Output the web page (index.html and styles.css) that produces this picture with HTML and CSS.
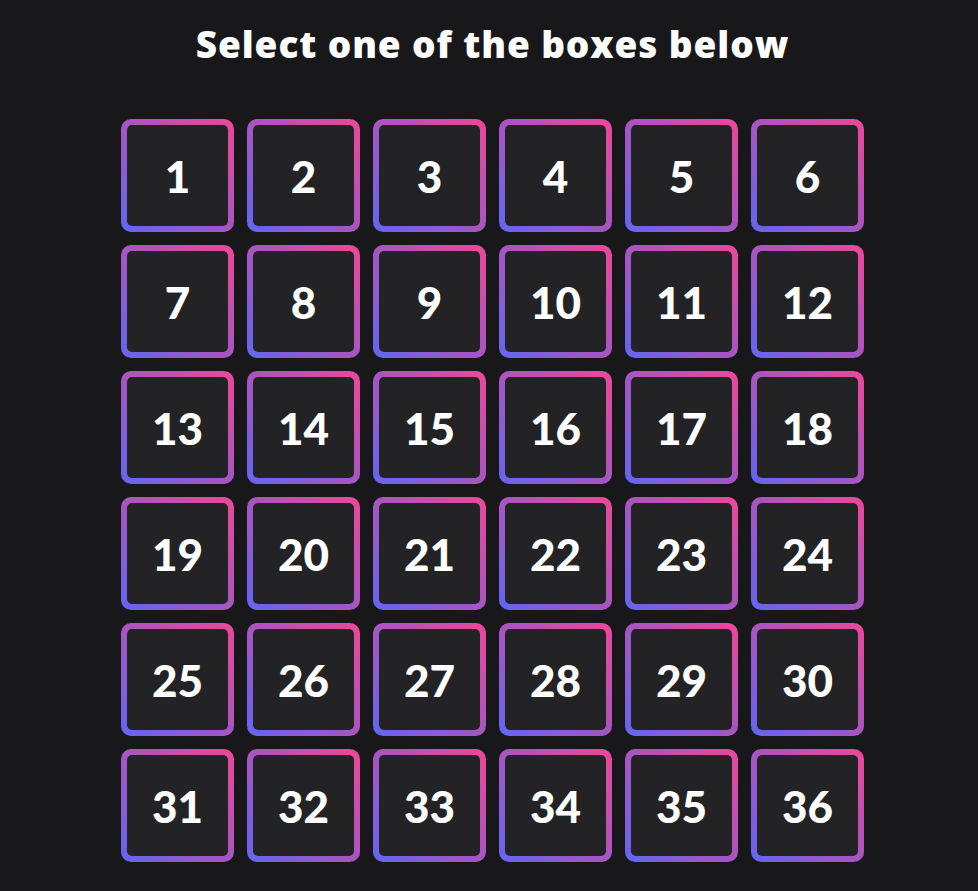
FILE: index.html
```html
<!DOCTYPE html>
<html>
<head>
<meta charset="utf-8">
<link rel="stylesheet" href="styles.css">
</head>
<body>
<main class="page">
  <h1 class="title">Select one of the boxes below</h1>
  <div class="grid">
    <div class="box"><div class="inner">1</div></div>
    <div class="box"><div class="inner">2</div></div>
    <div class="box"><div class="inner">3</div></div>
    <div class="box"><div class="inner">4</div></div>
    <div class="box"><div class="inner">5</div></div>
    <div class="box"><div class="inner">6</div></div>
    <div class="box"><div class="inner">7</div></div>
    <div class="box"><div class="inner">8</div></div>
    <div class="box"><div class="inner">9</div></div>
    <div class="box"><div class="inner">10</div></div>
    <div class="box"><div class="inner">11</div></div>
    <div class="box"><div class="inner">12</div></div>
    <div class="box"><div class="inner">13</div></div>
    <div class="box"><div class="inner">14</div></div>
    <div class="box"><div class="inner">15</div></div>
    <div class="box"><div class="inner">16</div></div>
    <div class="box"><div class="inner">17</div></div>
    <div class="box"><div class="inner">18</div></div>
    <div class="box"><div class="inner">19</div></div>
    <div class="box"><div class="inner">20</div></div>
    <div class="box"><div class="inner">21</div></div>
    <div class="box"><div class="inner">22</div></div>
    <div class="box"><div class="inner">23</div></div>
    <div class="box"><div class="inner">24</div></div>
    <div class="box"><div class="inner">25</div></div>
    <div class="box"><div class="inner">26</div></div>
    <div class="box"><div class="inner">27</div></div>
    <div class="box"><div class="inner">28</div></div>
    <div class="box"><div class="inner">29</div></div>
    <div class="box"><div class="inner">30</div></div>
    <div class="box"><div class="inner">31</div></div>
    <div class="box"><div class="inner">32</div></div>
    <div class="box"><div class="inner">33</div></div>
    <div class="box"><div class="inner">34</div></div>
    <div class="box"><div class="inner">35</div></div>
    <div class="box"><div class="inner">36</div></div>
  </div>
</main>
</body>
</html>
```
FILE: styles.css
```css
html, body {
  margin: 0;
  padding: 0;
  background: #18181b;
  height: 100%;
}
.page {
  display: flex;
  flex-direction: column;
  align-items: center;
  padding-left: 7px;
  font-family: "Lato", "Inter", sans-serif;
  color: #ffffff;
}
.title {
  margin: 21px 0 0 0;
  font-family: "Open Sans", "Lato", sans-serif;
  font-size: 37px;
  font-weight: 800;
  line-height: 46px;
  letter-spacing: 0.9px;
}
.grid {
  margin-top: 52px;
  display: grid;
  grid-template-columns: repeat(6, 113px);
  grid-auto-rows: 113px;
  gap: 13px;
}
.box {
  padding: 6px;
  border-radius: 10px;
  background: linear-gradient(to top right, #6366f1, #a855c0 50%, #ec4899);
}
.inner {
  height: 100%;
  border-radius: 5px;
  background: #232326;
  display: flex;
  align-items: center;
  justify-content: center;
  font-size: 44px;
  font-weight: 900;
}
```
